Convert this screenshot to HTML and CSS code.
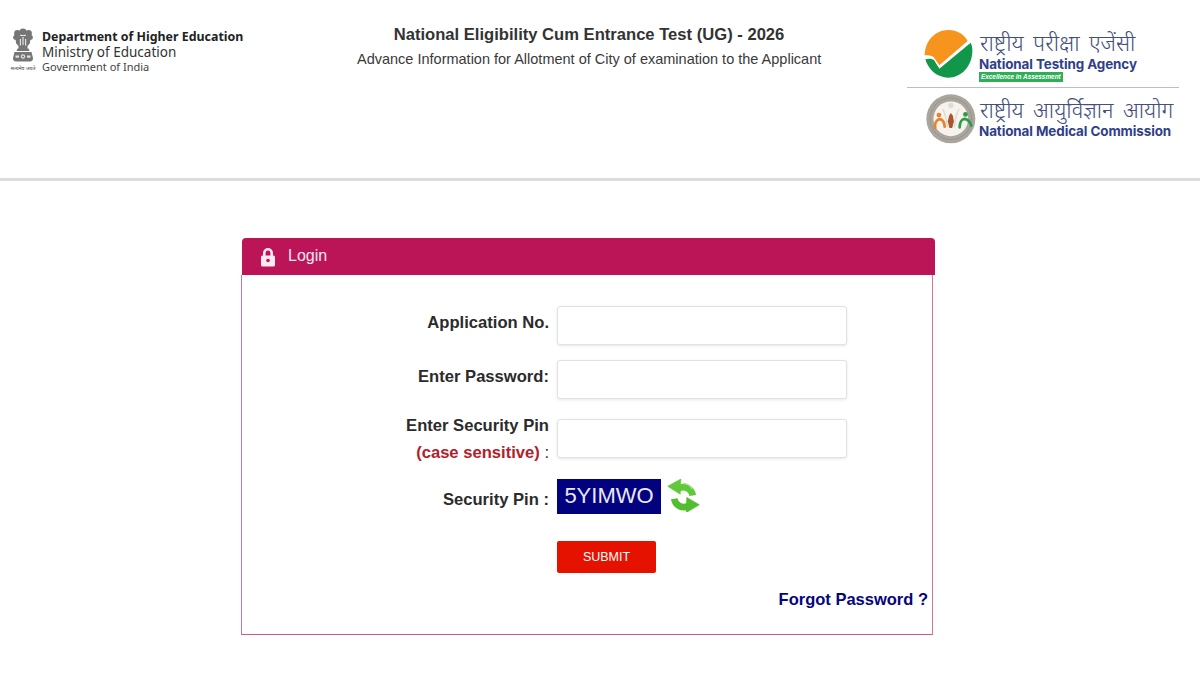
FILE: index.html
```html
<!DOCTYPE html>
<html lang="en">
<head>
<meta charset="utf-8">
<title>NEET (UG) 2026 - Login</title>
<link rel="stylesheet" href="styles.css">
</head>
<body>
<header class="site-header">
  <div class="dept">
    <div class="emblem-col">
      <svg class="emblem" viewBox="0 0 22 34" width="22" height="34" aria-hidden="true">
        <g fill="#767676">
          <circle cx="11" cy="3.800" r="3.400"/><circle cx="5.500" cy="5.500" r="3.400"/><circle cx="16.500" cy="5.500" r="3.400"/>
          <circle cx="3.500" cy="9.500" r="2.400"/><circle cx="18.500" cy="9.500" r="2.400"/>
          <path d="M3 8h16l-1.200 7.500-2.300 2.500v3h-9v-3l-2.300-2.500z"/>
          <path d="M5.500 20.500h11l1 2.500h-13z"/>
          <path d="M2.500 24h17l1.500 6a3 3 0 0 1-3 3.500H4a3 3 0 0 1-3-3.500z"/>
        </g>
        <g fill="#e2e2e2"><rect x="7.800" y="11" width="1.200" height="6.500"/><rect x="13" y="11" width="1.200" height="6.500"/><rect x="10.400" y="9" width="1.200" height="8"/><circle cx="11" cy="28.500" r="2.200"/><rect x="3.500" y="27.500" width="3.500" height="2.200"/><rect x="15" y="27.500" width="3.500" height="2.200"/></g>
        <circle cx="11" cy="28.500" r="1" fill="#767676"/>
      </svg>
      <span class="motto" lang="hi">सत्यमेव जयते</span>
    </div>
    <div class="dept-text">
      <div class="dept-a">Department of Higher Education</div>
      <div class="dept-b">Ministry of Education</div>
      <div class="dept-c">Government of India</div>
    </div>
  </div>
  <div class="exam">
    <h1 class="exam-title">National Eligibility Cum Entrance Test (UG) - 2026</h1>
    <p class="exam-sub">Advance Information for Allotment of City of examination to the Applicant</p>
  </div>
  <div class="agencies">
    <div class="agency agency-nta">
      <svg class="nta-mark" viewBox="12 12 150 150" width="50" height="50" aria-hidden="true">
        <path d="M14 88C15 45 45 12 85 12c27 0 47 13 58 33L58 118 40 92c-10-4-20-5-26-4z" fill="#f7941d"/>
        <path d="M152 50c6 12 6 25 4 38-6 40-36 67-71 67-35 0-60-25-69-55 9-3 19-2 26 2l16 26z" fill="#12964a"/>
      </svg>
      <div class="agency-text">
        <div class="hindi" lang="hi">राष्ट्रीय परीक्षा एजेंसी</div>
        <div class="agency-name">National Testing Agency</div>
        <div class="agency-tag">Excellence in Assessment</div>
      </div>
    </div>
    <div class="agency agency-nmc">
      <svg class="nmc-mark" viewBox="10 18 145 147" width="50" height="50" aria-hidden="true">
        <circle cx="82" cy="91" r="72" fill="#aaa69d"/>
        <circle cx="82" cy="91" r="51" fill="#f6f3ee"/>
        <circle cx="82" cy="91" r="61" fill="none" stroke="#8e8a82" stroke-width="3" stroke-dasharray="3 3"/>
        <path d="M58 62c10 18 12 38 14 54M106 62c-10 18-12 38-14 54" fill="none" stroke="#dcd9d2" stroke-width="4"/>
        <circle cx="82" cy="52" r="8" fill="#e0ddd6"/>
        <path d="M77 82l5-8 6 8 3 16-5 20h-8l-5-20z" fill="#a9552f"/>
        <circle cx="47" cy="80" r="7" fill="#e9822c"/>
        <path d="M36 118c-2-14 4-24 13-26 9 1 14 9 15 22" fill="none" stroke="#e9822c" stroke-width="8" stroke-linecap="round"/>
        <circle cx="125" cy="78" r="7" fill="#2f9a48"/>
        <path d="M108 116c0-14 6-24 14-25 9 1 17 10 20 20" fill="none" stroke="#2f9a48" stroke-width="8" stroke-linecap="round"/>
      </svg>
      <div class="agency-text nmc-text">
        <div class="hindi" lang="hi">राष्ट्रीय आयुर्विज्ञान आयोग</div>
        <div class="agency-name">National Medical Commission</div>
      </div>
    </div>
  </div>
</header>

<main class="login-wrap">
  <section class="panel">
    <div class="panel-head">
      <svg class="lock" viewBox="0 0 16 20" width="16" height="20" aria-hidden="true">
        <path d="M3 9V6a5 5 0 0 1 10 0v3h-2.600V6a2.400 2.400 0 0 0-4.800 0v3z" fill="#fbe9f0"/>
        <rect x="1" y="8.500" width="14" height="11" rx="1.500" fill="#fbe9f0"/>
        <circle cx="8" cy="13.500" r="1.800" fill="#bb1558"/>
      </svg>
      <span class="panel-title">Login</span>
    </div>
    <form class="panel-body">
      <div class="row row-app">
        <label class="lbl">Application No.</label>
        <input class="field" type="text">
      </div>
      <div class="row row-pass">
        <label class="lbl">Enter Password:</label>
        <input class="field" type="text">
      </div>
      <div class="row row-pin">
        <label class="lbl lbl-double">Enter Security Pin<br><span class="case"><b>(case sensitive)</b> :</span></label>
        <input class="field" type="text">
      </div>
      <div class="row row-captcha">
        <label class="lbl">Security Pin :</label>
        <div class="captcha">5YIMWO</div>
        <svg class="refresh" viewBox="22 22 100 100" width="33" height="33" aria-hidden="true">
          <path d="M100 72A29 29 0 0 0 58 50" fill="none" stroke="#60c93a" stroke-width="20"/>
          <path d="M24 44 64 22l-2 46z" fill="#60c93a" stroke="#60c93a" stroke-width="2" stroke-linejoin="round"/>
          <path d="M44 82A29 29 0 0 0 86 104" fill="none" stroke="#52bd2e" stroke-width="20"/>
          <path d="M120 100 80 124l2-46z" fill="#52bd2e" stroke="#52bd2e" stroke-width="2" stroke-linejoin="round"/>
          <path d="M98 52A30 30 0 0 0 70 36" fill="none" stroke="#a5e884" stroke-width="4"/>
        </svg>
      </div>
      <div class="row row-submit">
        <span class="spacer"></span>
        <button class="submit" type="button">SUBMIT</button>
      </div>
      <div class="forgot-row"><a class="forgot" href="#">Forgot Password ?</a></div>
    </form>
  </section>
</main>
</body>
</html>
```

FILE: styles.css
```css
* { box-sizing: border-box; }
html, body { margin: 0; padding: 0; }
body {
  background: #fff;
  font-family: "Liberation Sans", Arial, sans-serif;
  color: #2b2b2b;
  width: 1200px;
  height: 675px;
  overflow: hidden;
}

/* Header */
.site-header {
  height: 181px;
  border-bottom: 3px solid #dcdcdc;
  display: flex;
  position: relative;
}
.dept {
  width: 357px;
  padding: 28px 0 0 10px;
  display: flex;
  gap: 6px;
}
.emblem-col { width: 26px; display: flex; flex-direction: column; align-items: center; height: 48px; }
.emblem { display: block; }
.motto {
  font-family: "Noto Sans", "Noto Sans CJK SC", sans-serif;
  font-size: 5.200px;
  line-height: 7px;
  color: #444;
  white-space: nowrap;
  margin-top: 3px;
}
.dept-text { font-family: "Noto Sans", sans-serif; color: #333; }
.dept-a { font-size: 12.400px; font-weight: 700; line-height: 17px; color: #222; white-space: nowrap; }
.dept-b { font-size: 13.500px; line-height: 15px; white-space: nowrap; }
.dept-c { font-size: 11px; line-height: 14px; color: #444; white-space: nowrap; }

.exam { width: 464px; text-align: center; padding-top: 25px; }
.exam-title { margin: 0; font-size: 16.600px; line-height: 20px; font-weight: 700; color: #333; white-space: nowrap; }
.exam-sub { margin: 5px 0 0; font-size: 14.500px; line-height: 19px; color: #3a3a3a; white-space: nowrap; }

.agencies { margin-left: 86px; width: 272px; padding-top: 30px; }
.agency { display: flex; }
.agency-nta { padding: 0 0 5px 17px; border-bottom: 1px solid #c9b8bd; gap: 5px; height: 58px; }
.agency-nmc { padding: 6px 0 0 19px; gap: 3px; }
.nta-mark { display: block; flex: none; }
.nmc-mark { display: block; flex: none; }
.hindi {
  font-family: "Liberation Sans", "Noto Sans", sans-serif;
  font-size: 22px;
  font-weight: 300;
  line-height: 25px;
  color: #444f7c;
  white-space: nowrap;
  word-spacing: 3.300px;
  padding: 1px 0 0 1px;
  height: 25px;
}
.agency-name { font-family: "Inter", "Open Sans", sans-serif; font-size: 13.450px; font-weight: 700; line-height: 16px; padding-top: 1px; color: #2f3f88; white-space: nowrap; letter-spacing: -.1px; }
.agency-tag {
  display: block;
  width: 84px;
  background: #2fae57;
  color: #fff;
  font-style: italic;
  font-weight: 700;
  font-size: 6.400px;
  line-height: 10px;
  padding: 0 2px;
  white-space: nowrap;
}
.nmc-text { padding-top: 3px; }

/* Login panel */
.login-wrap { padding: 57px 0 0 242px; }
.panel { width: 693px; }
.panel-head {
  height: 37px;
  background: #bb1558;
  border-radius: 4px 4px 0 0;
  display: flex;
  align-items: center;
  padding-left: 18px;
  gap: 12px;
}
.panel-title { color: #fbe6ef; font-size: 16px; margin-top: -2px; }
.panel-body {
  width: 692px;
  height: 360px;
  margin-left: -1px;
  border: 1px solid #d9739b;
  border-top: 0;
  border-bottom-color: #c9598a;
  padding-top: 31px;
}
.row { display: flex; }
.lbl {
  width: 307px;
  text-align: right;
  font-size: 16.600px;
  font-weight: 700;
  line-height: 26px;
  color: #2b2b2b;
  flex: none;
}
.field {
  width: 290px;
  height: 39px;
  margin-left: 8px;
  background: #fff;
  border: 1px solid #e2e2e2;
  border-radius: 3px;
  box-shadow: 0 1px 3px rgba(0, 0, 0, .1);
  outline: 0;
  padding: 0;
}
.row-app { margin-bottom: 15px; }
.row-pass { margin-bottom: 20px; }
.row-pin { height: 39px; margin-bottom: 21px; }
.row-pin .lbl { margin-top: -7px; height: 53px; line-height: 27px; }
.row-app .lbl, .row-pass .lbl { padding-top: 4px; }
.case { font-weight: 400; color: #2b2b2b; }
.case b { color: #b3202a; }
.row-captcha { align-items: flex-start; height: 35px; margin-bottom: 27px; }
.row-captcha .lbl { padding-top: 8px; }
.captcha {
  width: 104px;
  height: 35px;
  margin-left: 8px;
  background: #020280;
  color: #e9e9f6;
  font-size: 22px;
  line-height: 34px;
  text-align: center;
}
.refresh { display: block; margin: 0 0 0 6px; flex: none; }
.row-submit { margin-bottom: 16px; }
.spacer { width: 315px; flex: none; }
.submit {
  width: 99px;
  height: 32px;
  background: #e51200;
  border: 0;
  border-radius: 2px;
  color: #fff;
  font-family: "Liberation Sans", sans-serif;
  font-size: 12.500px;
  padding: 0;
}
.forgot-row { text-align: right; padding-right: 4px; }
.forgot { color: #05057e; font-size: 16.500px; font-weight: 700; text-decoration: none; line-height: 20px; }
```
